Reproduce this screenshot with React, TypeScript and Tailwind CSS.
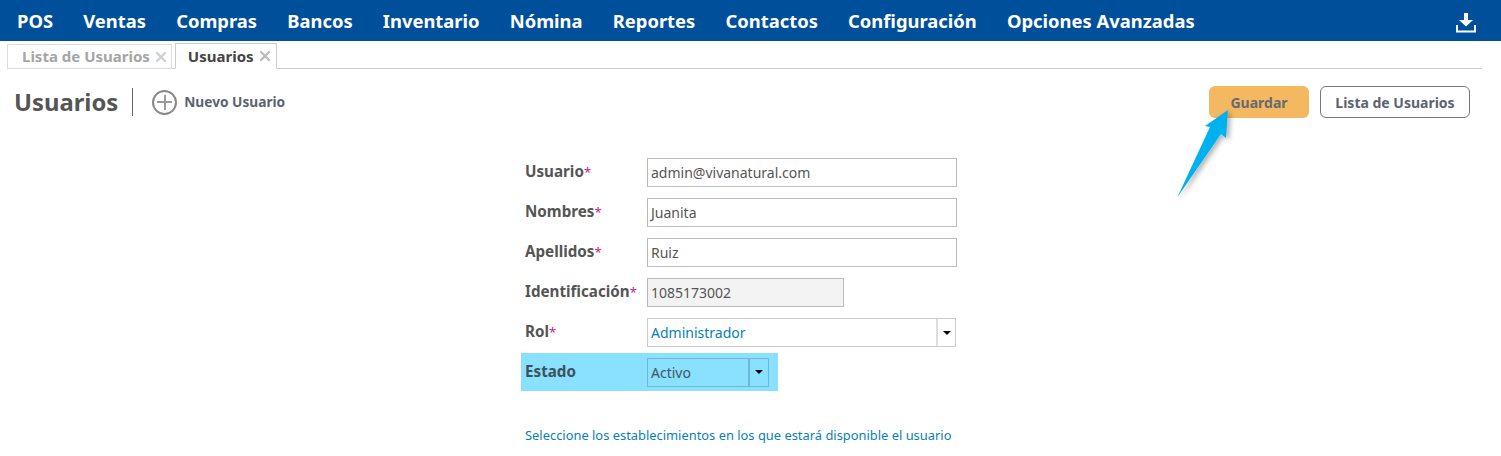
import { X } from 'lucide-react'

const navItems = ['POS', 'Ventas', 'Compras', 'Bancos', 'Inventario', 'Nómina', 'Reportes', 'Contactos', 'Configuración', 'Opciones Avanzadas']

const fields = [
    { label: 'Usuario', value: 'admin@vivanatural.com' },
    { label: 'Nombres', value: 'Juanita' },
    { label: 'Apellidos', value: 'Ruiz' },
]

function Label({ text, required = true, dark = false }: { text: string; required?: boolean; dark?: boolean }) {
    return (
        <label className={`w-[122px] shrink-0 text-[15.2px] font-bold -mt-0.5 ${dark ? 'text-[#3f5058]' : 'text-[#555555]'}`}>
            {text}
            {required && <span className="font-normal text-[13px] text-[#c2248b]">*</span>}
        </label>
    )
}

function Caret() {
    return <span className="w-0 h-0 border-x-[4px] border-x-transparent border-t-[4px] border-t-black" />
}

function DownloadIcon() {
    return (
        <svg className="ml-auto mt-[4px]" width="20" height="20" viewBox="0 0 20 20" fill="none">
            <path d="M8 0 H12 V7 H17 L10 13.5 L3 7 H8 Z" fill="#ffffff" />
            <path d="M1 12 V18.5 H19 V12" stroke="#ffffff" strokeWidth="2" />
        </svg>
    )
}

export default function App() {
    return (
        <div className="relative w-[1501px] h-[456px] overflow-hidden bg-white font-['Noto_Sans',sans-serif]">
            <nav className="h-[41px] bg-[#004f9a] flex items-center pl-[17px] pr-[25px] gap-[30.15px] text-white text-[18.4px] font-bold">
                {navItems.map((item) => (
                    <span key={item}>{item}</span>
                ))}
                <DownloadIcon />
            </nav>

            <div className="ml-[7px] mr-[19px] mt-[2px] h-[26px] border-b border-[#cccccc] flex items-end gap-[3px]">
                <div className="h-[25px] -mb-px pl-[14px] pr-[2px] border border-[#dddddd] flex items-center gap-[3px] text-[15px] font-bold text-[#a5a5a5]">
                    Lista de Usuarios
                    <X className="w-[16px] h-[16px] text-[#d0d0d0]" strokeWidth={3.5} />
                </div>
                <div className="h-[26px] -mb-px pl-[12px] pr-[3px] border border-[#cccccc] border-b-white bg-white flex items-center gap-[3px] text-[15px] font-bold text-[#444444]">
                    Usuarios
                    <X className="w-[16px] h-[16px] text-[#bbbbbb]" strokeWidth={3.5} />
                </div>
            </div>

            <div className="flex items-start pl-[14px] pr-[31px] pt-[17px]">
                <div className="flex items-center h-[32px]">
                    <h1 className="text-[23.8px] font-bold text-[#555555] pr-[14px] border-r border-[#666666] h-[28px] leading-[29px]">Usuarios</h1>
                    <span className="ml-[19px] w-[25px] h-[25px] rounded-full border-2 border-[#888888] flex items-center justify-center relative">
                        <span className="absolute w-[15px] h-[2px] bg-[#999999]" />
                        <span className="absolute w-[2px] h-[15px] bg-[#999999]" />
                    </span>
                    <span className="ml-[7px] text-[13.7px] font-bold text-[#5c6370]">Nuevo Usuario</span>
                </div>
                <button className="ml-auto w-[100px] h-[32px] rounded-md bg-[#f4b860] text-[14px] font-bold text-[#666a70]">Guardar</button>
                <button className="ml-[11px] w-[150px] h-[32px] rounded-md border border-[#777777] bg-white text-[14px] font-bold text-[#5c6370]">Lista de Usuarios</button>
            </div>

            <div className="ml-[525px] mt-[40px] flex flex-col">
                {fields.map((field) => (
                    <div key={field.label} className="flex items-center h-[29px] mb-[11px]">
                        <Label text={field.label} />
                        <div className="w-[310px] h-[29px] border border-[#bbbbbb] px-[3px] flex items-center text-[14px] text-[#555555]">{field.value}</div>
                    </div>
                ))}
                <div className="flex items-center h-[29px] mb-[11px]">
                    <Label text="Identificación" />
                    <div className="w-[197px] h-[29px] border border-[#bbbbbb] bg-[#f3f3f3] px-[3px] flex items-center text-[14px] text-[#555555]">1085173002</div>
                </div>
                <div className="flex items-center h-[29px]">
                    <Label text="Rol" />
                    <div className="w-[309px] h-[29px] border border-[#cccccc] flex items-center text-[14px] text-[#0a7fb5]">
                        <span className="flex-1 px-[3px]">Administrador</span>
                        <span className="w-[19px] h-full border-l-2 border-[#dddddd] flex items-center justify-center"><Caret /></span>
                    </div>
                </div>
                <div className="-ml-[4px] mt-[6px] w-[257px] h-[38px] bg-[#8ae0ff] pl-[4px] flex items-center">
                    <Label text="Estado" required={false} dark />
                    <div className="w-[122px] h-[29px] border border-[#6db8d4] flex items-center text-[14px] text-[#44555c]">
                        <span className="flex-1 px-[3px]">Activo</span>
                        <span className="w-[20px] h-full border-l-2 border-[#6db8d4] flex items-center justify-center"><Caret /></span>
                    </div>
                </div>
                <p className="mt-[35px] text-[12.9px] text-[#0a7fb5]">Seleccione los establecimientos en los que estará disponible el usuario</p>
            </div>

            <svg className="absolute left-[1170px] top-[105px]" width="70" height="100" viewBox="0 0 70 100">
                <defs>
                    <filter id="arrowShadow" x="-30%" y="-30%" width="160%" height="160%">
                        <feDropShadow dx="3" dy="2" stdDeviation="2.5" floodColor="#000000" floodOpacity="0.3" />
                    </filter>
                </defs>
                <path d="M58 5 L56 33 L51 29 L7.5 92 L40 22 L35 21 Z" fill="#00b1f0" filter="url(#arrowShadow)" />
            </svg>
        </div>
    )
}
